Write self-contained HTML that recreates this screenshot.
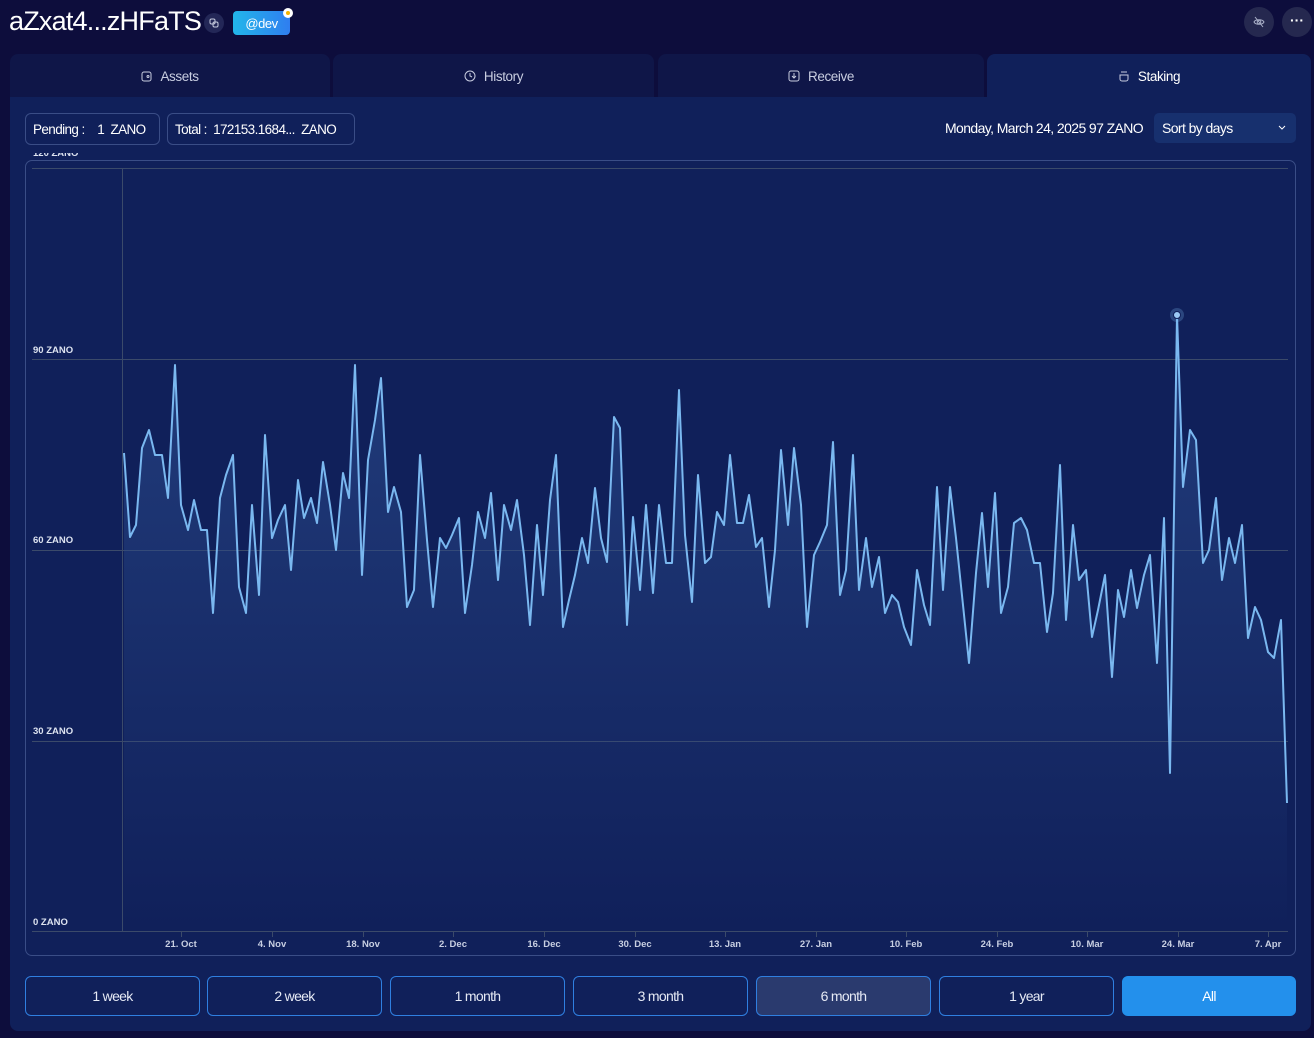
<!DOCTYPE html>
<html><head><meta charset="utf-8"><style>
*{box-sizing:border-box;margin:0;padding:0}
body{width:1314px;height:1038px;background:#0d0d3c;font-family:"Liberation Sans",sans-serif;color:#fff;position:relative;overflow:hidden}
.abs{position:absolute}
.tab{position:absolute;top:54px;height:44px;background:#0f1648;border-radius:8px 8px 0 0;display:flex;align-items:center;justify-content:center;font-size:13.5px;color:#c8cde0;letter-spacing:-0.4px}
.tab svg{margin-right:8px}
.pill{position:absolute;top:113px;height:32px;border:1px solid #3a4d86;border-radius:6px;font-size:13.5px;letter-spacing:-0.6px;display:flex;align-items:center;padding:0 7px}
.btn{position:absolute;top:976px;height:40px;width:175px;border:1px solid #2f7fe0;border-radius:6px;display:flex;align-items:center;justify-content:center;font-size:14px;letter-spacing:-0.7px;color:#e6eaf5}
.yl{position:absolute;left:33px;font-size:9.5px;color:#dde3f0;font-weight:bold}
.xl{position:absolute;top:939px;font-size:9.5px;color:#c8cfe2;font-weight:bold;transform:translateX(-50%)}
</style></head><body>
<div class="abs" style="left:9px;top:6px;font-size:27px;letter-spacing:-0.8px">aZxat4...zHFaTS</div>
<div class="abs" style="left:204px;top:13px;width:20px;height:20px;border-radius:50%;background:#232757;display:flex;align-items:center;justify-content:center"><svg width="10" height="10" viewBox="0 0 10 10"><rect x="1" y="1" width="5" height="5" rx="1.5" fill="none" stroke="#c8cde0"/><rect x="4" y="4" width="5" height="5" rx="1.5" fill="none" stroke="#c8cde0"/></svg></div>
<div class="abs" style="left:233px;top:11px;width:57px;height:24px;border-radius:4px;background:linear-gradient(90deg,#22b6ea,#2f7ef0);font-size:13px;display:flex;align-items:center;justify-content:center;letter-spacing:-0.5px">@dev</div>
<div class="abs" style="left:283px;top:8px;width:10px;height:10px;border-radius:50%;background:#fff"><div style="margin:3px;width:4px;height:4px;border-radius:50%;background:#f4b400"></div></div>
<div class="abs" style="left:1244px;top:7px;width:30px;height:30px;border-radius:50%;background:#25284f;display:flex;align-items:center;justify-content:center"><svg width="12" height="12" viewBox="0 0 12 12" fill="none" stroke="#aab0c8" stroke-width="1"><path d="M1 6c1.5-3 8.5-3 10 0c-1.5 3-8.5 3-10 0z"/><circle cx="6" cy="6" r="1.8"/><path d="M2 1l8 10"/></svg></div>
<div class="abs" style="left:1282px;top:7px;width:30px;height:30px;border-radius:50%;background:#25284f;text-align:center;line-height:26px;font-size:14px;font-weight:bold">···</div>

<div class="tab" style="left:10px;width:320px"><svg width="11" height="12" viewBox="0 0 11 12" fill="none" stroke="#c8cde0"><rect x="1" y="2" width="9" height="9" rx="2"/><circle cx="7" cy="6.5" r="1"/></svg>Assets</div>
<div class="tab" style="left:333px;width:321px"><svg width="12" height="12" viewBox="0 0 12 12" fill="none" stroke="#c8cde0"><circle cx="6" cy="6" r="5"/><path d="M6 3v3l2 1"/></svg>History</div>
<div class="tab" style="left:658px;width:326px"><svg width="12" height="12" viewBox="0 0 12 12" fill="none" stroke="#c8cde0"><rect x="1" y="1" width="10" height="10" rx="2"/><path d="M6 3v5M4 6l2 2 2-2"/></svg>Receive</div>
<div class="tab" style="left:987px;width:324px;background:#10205a;color:#fff"><svg width="12" height="12" viewBox="0 0 12 12" fill="none" stroke="#c8cde0"><path d="M3 2h6M2 5h8v4a2 2 0 0 1-2 2H4a2 2 0 0 1-2-2z"/></svg>Staking</div>

<div class="abs" style="left:10px;top:97px;width:1301px;height:934px;background:#10205a;border-radius:0 0 8px 8px"></div>

<div class="pill" style="left:25px;width:135px">Pending :&nbsp;&nbsp;&nbsp;&nbsp;1&nbsp; ZANO</div>
<div class="pill" style="left:167px;width:188px">Total :&nbsp; 172153.1684...&nbsp; ZANO</div>
<div class="abs" style="left:945px;top:120px;font-size:14px;letter-spacing:-0.6px">Monday, March 24, 2025 97 ZANO</div>
<div class="abs" style="left:1154px;top:113px;width:142px;height:30px;background:#17306e;border-radius:5px;font-size:14px;letter-spacing:-0.6px;padding:7px 8px">Sort by days<svg class="abs" style="right:10px;top:12px" width="8" height="6" viewBox="0 0 8 6" fill="none" stroke="#fff"><path d="M1 1l3 3 3-3"/></svg></div>

<div class="abs" style="left:25px;top:160px;width:1271px;height:796px;border:1px solid #3a4d86;border-radius:7px;overflow:hidden">
<svg class="abs" style="left:-26px;top:-161px" width="1314" height="1038">
<defs><linearGradient id="g" x1="0" y1="0" x2="0" y2="1"><stop offset="0" stop-color="#2a4a8c" stop-opacity=".7"/><stop offset="1" stop-color="#2a4a8c" stop-opacity="0"/></linearGradient></defs>
<g stroke="#3b4a6a" stroke-width="1"><path d="M32 168.5H1288M32 359.5H1288M32 550.5H1288M32 741.5H1288M32 931.5H1288M122.5 168V931"/>
<path d="M181.5 931v6M272.5 931v6M363.5 931v6M453.5 931v6M544.5 931v6M635.5 931v6M725.5 931v6M816.5 931v6M906.5 931v6M997.5 931v6M1087.5 931v6M1178.5 931v6M1268.5 931v6"/></g>
<polygon fill="url(#g)" points="124,931 124,453 130,537 136,525 142,448 149,430 155,455 162,455 168,498 175,365 181,505 188,530 194,500 201,530 207,530 213,613 220,498 226,475 233,455 239,587 246,613 252,505 259,595 265,435 272,538 278,520 285,505 291,570 298,480 304,518 311,498 317,523 323,462 330,505 336,550 343,473 349,498 355,365 362,575 368,460 375,420 381,378 388,512 394,487 401,512 407,607 414,590 420,455 427,540 433,607 440,538 446,548 452,535 459,518 465,613 472,565 478,512 485,538 491,493 498,580 504,505 511,530 517,500 524,555 530,625 537,525 543,595 550,500 556,455 563,627 569,600 575,575 582,538 588,563 595,488 601,538 607,562 614,417 620,428 627,625 633,517 640,590 646,505 653,593 659,505 666,563 672,563 679,390 685,535 692,602 698,475 705,563 711,557 717,512 724,525 730,455 737,523 743,523 749,495 756,547 762,538 769,607 775,550 781,450 788,525 794,448 801,505 807,627 814,555 820,542 827,525 833,442 840,595 846,570 853,455 859,590 866,538 872,587 879,557 885,613 892,595 898,602 904,627 911,645 917,570 924,605 930,625 937,487 943,590 950,487 956,538 963,605 969,663 976,573 982,513 988,587 995,493 1001,613 1008,587 1014,523 1021,518 1027,530 1034,563 1040,563 1047,632 1053,593 1060,465 1066,620 1073,525 1079,580 1086,570 1092,637 1098,610 1105,575 1112,677 1118,590 1124,617 1131,570 1137,608 1144,575 1150,555 1157,663 1164,518 1170,773 1177,315 1183,487 1190,430 1196,440 1203,563 1209,550 1216,498 1222,580 1229,538 1235,563 1242,525 1248,638 1255,607 1261,620 1268,652 1274,658 1281,620 1287,803 1287,931"/>
<polyline fill="none" stroke="#7ab8f0" stroke-width="2" stroke-linejoin="round" points="124,453 130,537 136,525 142,448 149,430 155,455 162,455 168,498 175,365 181,505 188,530 194,500 201,530 207,530 213,613 220,498 226,475 233,455 239,587 246,613 252,505 259,595 265,435 272,538 278,520 285,505 291,570 298,480 304,518 311,498 317,523 323,462 330,505 336,550 343,473 349,498 355,365 362,575 368,460 375,420 381,378 388,512 394,487 401,512 407,607 414,590 420,455 427,540 433,607 440,538 446,548 452,535 459,518 465,613 472,565 478,512 485,538 491,493 498,580 504,505 511,530 517,500 524,555 530,625 537,525 543,595 550,500 556,455 563,627 569,600 575,575 582,538 588,563 595,488 601,538 607,562 614,417 620,428 627,625 633,517 640,590 646,505 653,593 659,505 666,563 672,563 679,390 685,535 692,602 698,475 705,563 711,557 717,512 724,525 730,455 737,523 743,523 749,495 756,547 762,538 769,607 775,550 781,450 788,525 794,448 801,505 807,627 814,555 820,542 827,525 833,442 840,595 846,570 853,455 859,590 866,538 872,587 879,557 885,613 892,595 898,602 904,627 911,645 917,570 924,605 930,625 937,487 943,590 950,487 956,538 963,605 969,663 976,573 982,513 988,587 995,493 1001,613 1008,587 1014,523 1021,518 1027,530 1034,563 1040,563 1047,632 1053,593 1060,465 1066,620 1073,525 1079,580 1086,570 1092,637 1098,610 1105,575 1112,677 1118,590 1124,617 1131,570 1137,608 1144,575 1150,555 1157,663 1164,518 1170,773 1177,315 1183,487 1190,430 1196,440 1203,563 1209,550 1216,498 1222,580 1229,538 1235,563 1242,525 1248,638 1255,607 1261,620 1268,652 1274,658 1281,620 1287,803"/>
<circle cx="1177" cy="315" r="7" fill="#7ab8f0" fill-opacity=".25"/><circle cx="1177" cy="315" r="3.5" fill="#9ccaf5" stroke="#10205a"/>
</svg></div>
<div class="yl" style="top:153px;height:6px;overflow:hidden;line-height:1px">120 ZANO</div>
<div class="yl" style="top:345px">90 ZANO</div>
<div class="yl" style="top:535px">60 ZANO</div>
<div class="yl" style="top:726px">30 ZANO</div>
<div class="yl" style="top:917px">0 ZANO</div>
<div class="xl" style="left:181px">21. Oct</div><div class="xl" style="left:272px">4. Nov</div><div class="xl" style="left:363px">18. Nov</div><div class="xl" style="left:453px">2. Dec</div><div class="xl" style="left:544px">16. Dec</div><div class="xl" style="left:635px">30. Dec</div><div class="xl" style="left:725px">13. Jan</div><div class="xl" style="left:816px">27. Jan</div><div class="xl" style="left:906px">10. Feb</div><div class="xl" style="left:997px">24. Feb</div><div class="xl" style="left:1087px">10. Mar</div><div class="xl" style="left:1178px">24. Mar</div><div class="xl" style="left:1268px">7. Apr</div>

<div class="btn" style="left:25px">1 week</div>
<div class="btn" style="left:207px">2 week</div>
<div class="btn" style="left:390px">1 month</div>
<div class="btn" style="left:573px">3 month</div>
<div class="btn" style="left:756px;background:#2a3a6e">6 month</div>
<div class="btn" style="left:939px">1 year</div>
<div class="btn" style="left:1122px;width:174px;background:#2390ec;border-color:#2390ec;color:#fff">All</div>
</body></html>
